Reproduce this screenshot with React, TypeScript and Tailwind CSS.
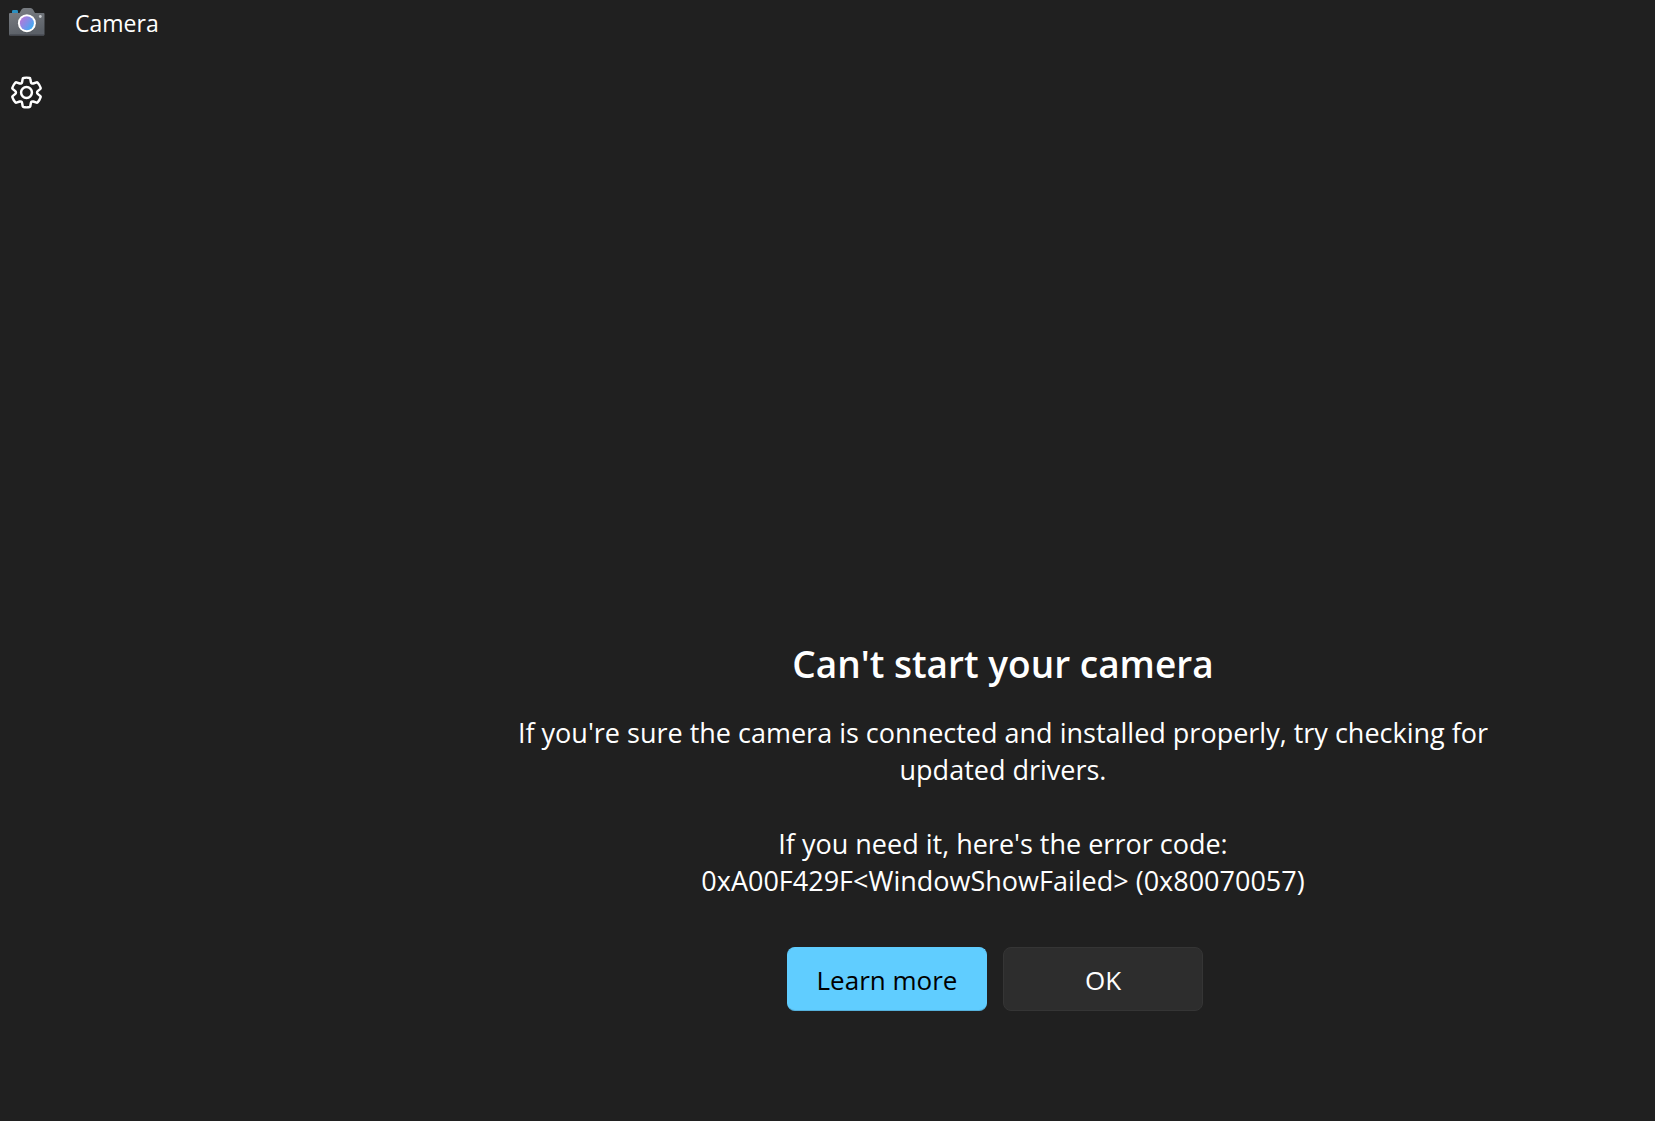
function CameraLogo() {
  return (
    <svg aria-hidden="true" className="h-7 w-9" viewBox="0 0 36 28">
      <defs>
        <linearGradient id="body" x1="0" y1="0" x2="0.3" y2="1">
          <stop offset="0" stopColor="#7d8186" />
          <stop offset="1" stopColor="#5b6067" />
        </linearGradient>
        <linearGradient id="lens" x1="0.1" y1="0.2" x2="0.9" y2="0.8">
          <stop offset="0" stopColor="#b17ad8" />
          <stop offset="0.5" stopColor="#7f8ee8" />
          <stop offset="1" stopColor="#3fabf2" />
        </linearGradient>
      </defs>
      <path d="M3 5V3.2Q3 2 4.200 2H7.800Q9 2 9 3.200V5Z" fill="#2b8fc0" />
      <path
        d="M1 5H10.500L12.500 1.500Q13.300 0 15 0H21.500Q23.200 0 24 1.500L26 5H34.500Q35.500 5 35.500 6V26.500Q35.500 27.500 34.500 27.500H1Q0 27.500 0 26.500V6Q0 5 1 5Z"
        fill="url(#body)"
      />
      <path d="M0.500 26.900H35" stroke="#484d54" strokeWidth="1.200" />
      <circle cx="17.900" cy="15.700" r="9.400" fill="#4c5158" opacity="0.5" />
      <circle cx="17.900" cy="15.200" r="9" fill="#fff" />
      <circle cx="17.900" cy="15.200" r="7" fill="url(#lens)" />
      <circle cx="31.300" cy="8.500" r="1.400" fill="#c9ccd0" />
    </svg>
  );
}

function GearIcon() {
  return (
    <svg
      aria-hidden="true"
      className="size-[35px]"
      viewBox="0 0 20 20"
      fill="none"
      stroke="#fff"
      strokeWidth="1.4"
      strokeLinejoin="round"
    >
      <path d="M1.91 7.38A8.5 8.5 0 0 1 3.69 4.3a.5.5 0 0 1 .54-.13l1.92.68a1 1 0 0 0 1.32-.76l.36-2a.5.5 0 0 1 .4-.4 8.53 8.53 0 0 1 3.55 0c.2.04.35.2.38.4l.37 2a1 1 0 0 0 1.32.76l1.92-.68a.5.5 0 0 1 .54.13 8.5 8.5 0 0 1 1.78 3.08c.06.2 0 .4-.15.54l-1.56 1.32a1 1 0 0 0 0 1.52l1.56 1.32a.5.5 0 0 1 .15.54 8.5 8.5 0 0 1-1.78 3.08.5.5 0 0 1-.54.13l-1.92-.68a1 1 0 0 0-1.32.76l-.37 2a.5.5 0 0 1-.38.4 8.53 8.53 0 0 1-3.56 0 .5.5 0 0 1-.39-.4l-.36-2a1 1 0 0 0-1.32-.76l-1.92.68a.5.5 0 0 1-.54-.13 8.5 8.5 0 0 1-1.78-3.08.5.5 0 0 1 .15-.54l1.56-1.32a1 1 0 0 0 0-1.52L2.06 7.92a.5.5 0 0 1-.15-.54z" />
      <circle cx="10" cy="10" r="3.100" />
    </svg>
  );
}

export default function App() {
  return (
    <div className="flex min-h-screen flex-col bg-[#202020] font-['Open_Sans','Noto_Sans',sans-serif] text-white">
      <header className="flex h-12 items-center gap-[30px] px-[9px] pb-1">
        <CameraLogo />
        <span className="pt-0.5 text-[23px] leading-8">Camera</span>
      </header>
      <nav className="flex px-[9px] pt-[27px]">
        <button type="button" aria-label="Settings">
          <GearIcon />
        </button>
      </nav>
      <main className="ml-[351px] flex flex-1 flex-col items-center justify-end pb-[110px] text-center">
        <h1 className="text-[37px] leading-[52px] font-semibold">Can't start your camera</h1>
        <div className="mt-6 flex max-w-[980px] flex-col gap-[37px] text-[27px] leading-[37px]">
          <p>If you're sure the camera is connected and installed properly, try checking for updated drivers.</p>
          <p>
            If you need it, here's the error code:
            <br />
            0xA00F429F&lt;WindowShowFailed&gt; (0x80070057)
          </p>
        </div>
        <div className="mt-12 mr-4 flex gap-4 text-[26px]">
          <button
            type="button"
            className="h-16 w-[200px] rounded-lg border border-[#60cdff] border-b-[#55b1dc] bg-[#60cdff] pt-0.5 text-black"
          >
            Learn more
          </button>
          <button type="button" className="h-16 w-[200px] rounded-lg border border-[#353535] bg-[#2d2d2d] pt-0.5">
            OK
          </button>
        </div>
      </main>
    </div>
  );
}
